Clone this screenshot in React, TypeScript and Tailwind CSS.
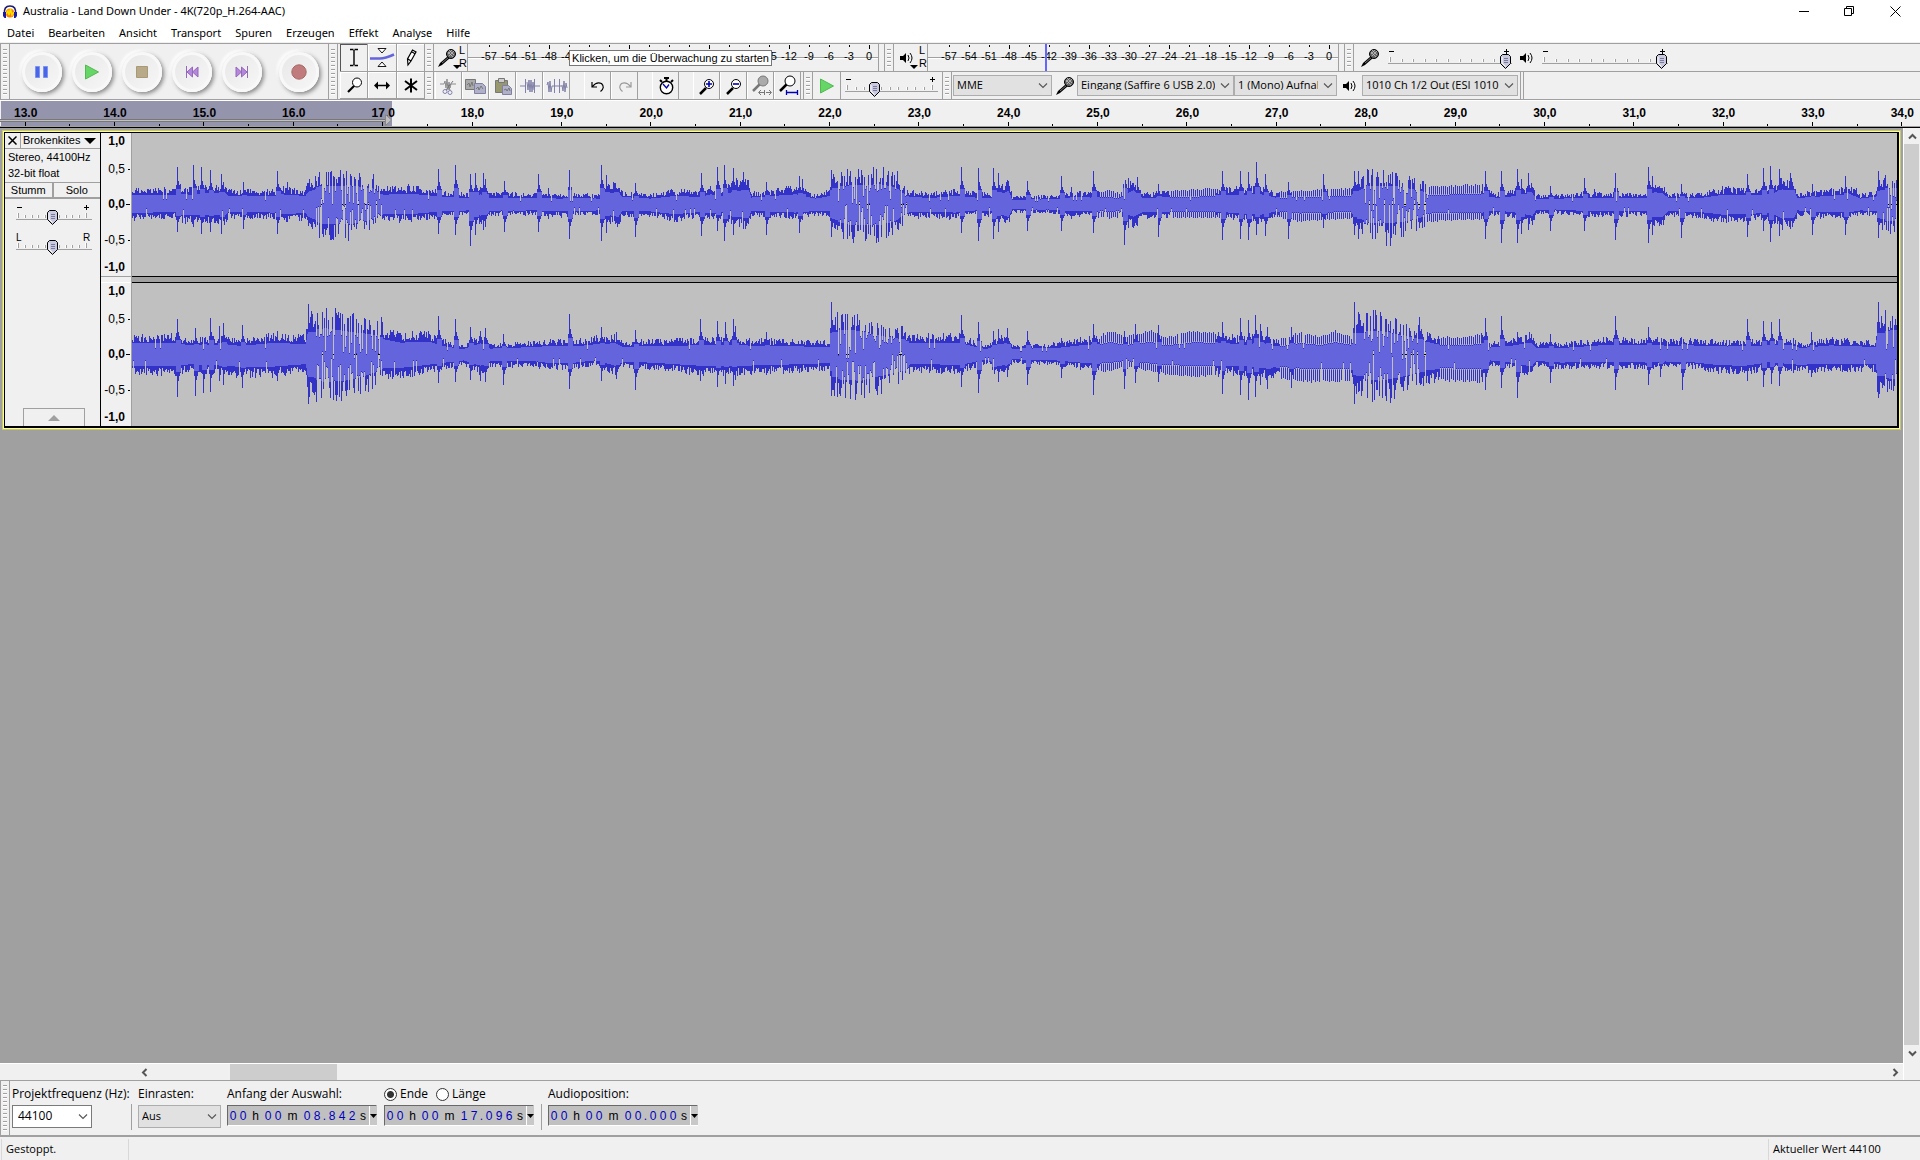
import { useState } from "react";
import type { ReactNode } from "react";
import clsx from "clsx";

type Point = [x: number, up: number, down: number];

interface Channel {
  base: Point[];
  spikes: Point[];
  striped: [number, number][];
}

const WAVE_START = 132;
const WAVE_WIDTH = 1765;
const WAVE_HEIGHT = 143;
const MIDDLE = 71;

// loud drum fills, where single columns do not cross the zero line
const FILLS: [number, number][] = [[316, 382], [838, 908], [1364, 1425], [1885, 1897]];

const LEFT: Channel = {
  base: [
    [132, 17, 15], [150, 16, 14], [175, 17, 13], [180, 19, 18], [190, 17, 18], [208, 20, 18], [224, 22, 20], [228, 15, 13], [275, 14, 14],
    [280, 18, 17], [305, 15, 15], [308, 23, 22], [320, 30, 31], [350, 31, 32], [372, 26, 24], [380, 17, 16], [410, 19, 17], [440, 14, 12],
    [468, 11, 10], [480, 18, 20], [487, 12, 11], [535, 11, 10], [560, 10, 12], [575, 11, 11], [600, 10, 10], [606, 20, 18], [618, 22, 22],
    [622, 13, 11], [650, 10, 12], [675, 15, 17], [700, 13, 13], [710, 18, 15], [722, 14, 13], [733, 24, 22], [748, 26, 24], [751, 12, 11],
    [795, 18, 14], [815, 10, 11], [830, 15, 12], [832, 29, 26], [850, 31, 33], [880, 33, 33], [895, 28, 27], [906, 14, 13], [930, 11, 13],
    [955, 15, 14], [975, 12, 10], [992, 12, 12], [1008, 24, 22], [1012, 8, 8], [1055, 9, 9], [1075, 13, 12], [1090, 12, 11], [1110, 14, 14],
    [1120, 11, 12], [1133, 26, 22], [1142, 11, 13], [1180, 14, 13], [1220, 16, 13], [1260, 18, 18], [1275, 12, 12], [1300, 14, 17], [1350, 16, 14],
    [1355, 22, 22], [1365, 31, 30], [1400, 29, 29], [1430, 18, 17], [1450, 19, 16], [1480, 20, 15], [1490, 13, 11], [1500, 11, 11],
    [1515, 15, 14], [1532, 20, 20], [1536, 10, 9], [1560, 10, 9], [1600, 12, 12], [1646, 11, 11], [1654, 22, 22], [1662, 20, 22], [1668, 11, 11],
    [1700, 11, 13], [1722, 17, 18], [1750, 16, 16], [1770, 18, 15], [1782, 27, 25], [1794, 25, 23], [1797, 11, 10], [1820, 14, 13], [1850, 18, 13],
    [1860, 10, 10], [1876, 14, 11], [1880, 26, 26], [1897, 27, 26],
  ],
  spikes: [
    [177, 37, 27], [193, 39, 22], [201, 37, 29], [210, 34, 27], [221, 30, 29], [243, 22, 24], [277, 33, 29], [287, 22, 10], [344, 20, 44],
    [346, 33, 20], [350, 30, 36], [353, 34, 20], [373, 30, 19], [438, 35, 29], [455, 39, 30], [470, 30, 41], [475, 31, 30], [483, 31, 25],
    [485, 25, 22], [504, 23, 27], [538, 30, 27], [548, 16, 14], [569, 34, 34], [601, 39, 36], [606, 29, 28], [635, 21, 32], [701, 31, 31],
    [717, 37, 26], [724, 39, 36], [733, 36, 30], [743, 32, 24], [766, 22, 30], [799, 28, 28], [802, 25, 15], [831, 34, 32], [841, 32, 20],
    [862, 21, 41], [876, 31, 38], [897, 33, 24], [961, 37, 28], [978, 36, 36], [993, 36, 34], [998, 31, 27], [1027, 23, 26], [1061, 28, 26],
    [1071, 17, 14], [1093, 33, 28], [1124, 39, 40], [1128, 26, 23], [1137, 27, 21], [1158, 20, 32], [1222, 33, 35], [1240, 33, 34],
    [1248, 32, 35], [1256, 42, 30], [1265, 30, 31], [1288, 22, 34], [1323, 30, 23], [1354, 33, 30], [1358, 33, 34], [1386, 22, 41],
    [1390, 27, 41], [1395, 31, 30], [1419, 29, 22], [1485, 33, 34], [1501, 33, 38], [1517, 35, 38], [1521, 25, 29], [1528, 31, 25],
    [1550, 18, 26], [1584, 26, 26], [1594, 15, 12], [1615, 31, 35], [1648, 37, 38], [1652, 28, 30], [1681, 20, 33], [1747, 30, 32],
    [1763, 36, 26], [1770, 38, 37], [1779, 35, 31], [1790, 31, 24], [1812, 20, 30], [1845, 28, 30], [1856, 16, 6], [1878, 33, 33],
  ],
  striped: [[1100, 1118], [1170, 1215], [1280, 1350], [1425, 1480]],
};

const RIGHT: Channel = {
  base: [
    [132, 20, 20], [175, 20, 21], [190, 16, 17], [225, 18, 20], [240, 15, 22], [270, 20, 22], [305, 19, 17], [308, 40, 40], [325, 43, 45],
    [350, 37, 42], [375, 32, 29], [382, 28, 24], [400, 21, 24], [428, 23, 18], [445, 14, 14], [463, 9, 10], [480, 20, 20], [490, 10, 12],
    [535, 13, 12], [550, 15, 15], [575, 14, 14], [595, 18, 10], [615, 20, 20], [622, 13, 13], [650, 15, 14], [700, 16, 20], [725, 17, 20],
    [740, 16, 20], [800, 14, 17], [830, 13, 15], [832, 40, 40], [860, 39, 43], [880, 30, 35], [905, 24, 26], [910, 20, 17], [960, 20, 18],
    [985, 9, 9], [1006, 21, 20], [1012, 10, 8], [1055, 11, 10], [1080, 16, 14], [1100, 19, 17], [1110, 24, 16], [1125, 18, 12], [1150, 24, 17],
    [1165, 17, 20], [1195, 24, 22], [1220, 21, 21], [1245, 17, 20], [1260, 22, 24], [1275, 14, 23], [1300, 22, 27], [1320, 18, 28], [1335, 24, 27],
    [1352, 18, 27], [1356, 38, 38], [1380, 39, 43], [1400, 32, 37], [1420, 25, 29], [1440, 17, 26], [1470, 18, 28], [1482, 21, 28], [1490, 12, 10],
    [1510, 15, 14], [1530, 21, 21], [1536, 12, 11], [1560, 11, 14], [1600, 16, 13], [1650, 17, 14], [1665, 15, 12], [1690, 16, 13], [1720, 14, 19],
    [1745, 14, 20], [1770, 16, 13], [1790, 17, 17], [1800, 11, 18], [1830, 16, 16], [1875, 13, 17], [1877, 38, 38], [1897, 40, 40],
  ],
  spikes: [
    [177, 35, 42], [195, 26, 41], [203, 26, 38], [210, 36, 37], [219, 28, 26], [223, 31, 30], [242, 29, 33], [277, 23, 26], [308, 50, 49],
    [335, 46, 40], [349, 46, 35], [372, 35, 34], [381, 37, 30], [438, 38, 28], [455, 35, 27], [470, 27, 25], [480, 23, 26], [485, 26, 27],
    [503, 20, 30], [569, 40, 34], [601, 27, 26], [616, 22, 24], [635, 24, 35], [700, 35, 26], [717, 33, 32], [725, 32, 29], [733, 35, 31],
    [735, 28, 25], [766, 22, 20], [831, 52, 41], [845, 40, 43], [961, 39, 32], [978, 32, 38], [993, 23, 30], [998, 25, 27], [1007, 26, 22],
    [1027, 23, 30], [1061, 16, 23], [1093, 30, 40], [1124, 23, 34], [1135, 30, 28], [1158, 29, 27], [1222, 32, 39], [1240, 36, 40],
    [1248, 34, 45], [1255, 39, 42], [1260, 30, 30], [1267, 27, 34], [1291, 27, 33], [1354, 52, 49], [1358, 42, 37], [1390, 28, 48],
    [1395, 36, 35], [1419, 37, 28], [1485, 36, 35], [1501, 38, 33], [1517, 22, 43], [1529, 22, 28], [1550, 20, 28], [1615, 38, 35],
    [1648, 27, 30], [1660, 23, 22], [1682, 24, 35], [1747, 35, 26], [1763, 33, 32], [1771, 32, 29], [1779, 35, 31], [1811, 22, 22], [1878, 52, 43],
  ],
  striped: [[1100, 1215], [1280, 1350], [1440, 1480]],
};

const inRange = (x: number, ranges: [number, number][]) => ranges.some(([a, b]) => x >= a && x <= b);

function baseAt(base: Point[], x: number, side: 1 | 2) {
  const i = Math.max(1, base.findIndex((p) => p[0] >= x));
  const a = base[i - 1];
  const b = base[i];
  const t = (x - a[0]) / (b[0] - a[0]);
  return a[side] + (b[side] - a[side]) * t;
}

function buildWave(channel: Channel, seed: number) {
  let state = seed;
  const rand = () => {
    state = (state * 1664525 + 1013904223) % 4294967296;
    return state / 4294967296;
  };
  const FALLOFF = [1, 0.62, 0.5, 0.42];
  let peaks = "";
  let rms = "";

  for (let i = 0; i < WAVE_WIDTH; i++) {
    const x = i + WAVE_START;
    const fill = inRange(x, FILLS);
    const stripe = inRange(x, channel.striped);
    const gap = fill ? rand() : 1;
    const ends = ([1, 2] as const).map((side) => {
      const b = baseAt(channel.base, x, side);
      const skip = (side === 1 && gap < 0.25) || (side === 2 && gap > 0.25 && gap < 0.5);
      let peak = b * (fill ? 0.4 + 0.75 * rand() : 0.6 + 0.46 * rand());
      let body = b * (fill ? 0.6 : 0.54);
      if (stripe) peak = i % 2 ? b * (0.9 + 0.12 * rand()) : b * 0.5;
      for (const s of channel.spikes) {
        const d = x - s[0];
        if (d >= -1 && d < 4) {
          peak = Math.max(peak, s[side] * (d < 0 ? 0.5 : FALLOFF[d]));
          body = Math.max(body, s[side] * 0.4);
        }
      }
      if (skip) peak = rand() * b * 0.7 - 6;
      else if (!fill && rand() < 0.03) peak = b * 0.3;
      return [Math.round(peak), Math.round(Math.min(body, peak - 1))];
    });
    const [[up, bodyUp], [down, bodyDown]] = ends;
    peaks += `M${i} ${MIDDLE - up}h1V${MIDDLE + down + 1}h-1z`;
    if (bodyUp + bodyDown > 0) rms += `M${i} ${MIDDLE - bodyUp}h1V${MIDDLE + bodyDown + 1}h-1z`;
  }
  return { peaks, rms };
}

const WAVES = [buildWave(LEFT, 7), buildWave(RIGHT, 91)];

function Waveform({ index }: { index: number }) {
  return (
    <svg viewBox={`0 0 ${WAVE_WIDTH} ${WAVE_HEIGHT}`} preserveAspectRatio="none" shapeRendering="crispEdges" className="block h-[143px] w-full bg-[#c0c0c0]">
      <path d={`M0 ${MIDDLE}h${WAVE_WIDTH}v1H0z`} fill="#000" />
      <path d={WAVES[index].peaks} fill="#3232c8" />
      <path d={WAVES[index].rms} fill="#6464dc" />
    </svg>
  );
}

function Grip({ tall }: { tall?: boolean }) {
  return (
    <div className="flex w-[10px] shrink-0 items-center justify-center border-x border-[#a0a0a0] bg-[#f0f0f0]">
      <div
        className={clsx(
          "w-1 bg-[repeating-linear-gradient(to_bottom,#a0a0a0_0_1px,#fff_1px_2px,transparent_2px_4px)]",
          tall ? "h-[46px]" : "h-[18px]",
        )}
      />
    </div>
  );
}

function MicIcon() {
  return (
    <svg width="20" height="20" viewBox="0 0 20 20" className="shrink-0">
      <path d="M1 19l2-4 8-7 2 2-8 7z" fill="#000" />
      <path d="M5 15l7-6" stroke="#777" strokeWidth="1" />
      <circle cx="14" cy="6" r="4.5" fill="#666" stroke="#000" />
      <path d="M11 4l5 5M12 2l5 5M12 8l5-5M11 6l4-4" stroke="#ccc" strokeWidth=".7" />
    </svg>
  );
}

function SpeakerIcon() {
  return (
    <svg width="14" height="14" viewBox="0 0 14 14" className="shrink-0">
      <path d="M0 5h3l3-3v10L3 9H0z" fill="#000" />
      <path d="M8 4q2 3 0 6M10 2q4 5 0 10" fill="none" stroke="#000" strokeWidth="1" />
    </svg>
  );
}

function Chevron() {
  return (
    <svg width="10" height="6" viewBox="0 0 10 6" className="pointer-events-none absolute right-[4px] top-1/2 -translate-y-1/2">
      <path d="M1 .5l4 4 4-4" fill="none" stroke="#555" strokeWidth="1.1" />
    </svg>
  );
}

interface SliderProps {
  label: string;
  width: number;
  value: number;
  low?: string;
  high?: string;
  ticks?: number;
}

function Slider({ label, width, value, low = "-", high = "+", ticks = 11 }: SliderProps) {
  const [v, setV] = useState(value);
  const cx = Math.round((v / 100) * (width - 12)) + 6;
  const step = (width - 8) / (ticks - 1);
  return (
    <div className="relative shrink-0">
      <svg width={width} height="22" className="block" shapeRendering="crispEdges">
        {Array.from({ length: ticks }, (_, i) => {
          const x = Math.round(2 + i * step);
          const h = i === 0 || i === ticks - 1 ? 5 : 3;
          return (
            <g key={i}>
              <rect x={x - 1} y={15 - h} width="1" height={h} fill="#fff" />
              <rect x={x} y={15 - h} width="1" height={h} fill="#a0a0a0" />
            </g>
          );
        })}
        <rect x="0" y="16" width={width} height="1" fill="#a0a0a0" />
        {low === "-" ? (
          <path d={`M1 4h5v1H1zM${width - 8} 4h5v1h-5zM${width - 6} 2h1v5h-1z`} fill="#000" />
        ) : (
          <g fontFamily="Liberation Sans, sans-serif" fontSize="10">
            <text x="0" y="8">{low}</text>
            <text x={width - 9} y="8">{high}</text>
          </g>
        )}
        <g shapeRendering="auto" transform={`translate(${cx - 6} 7)`}>
          <path d="M2.5 .5h6l2 2v7l-5 5-5-5v-7z" fill="#c8c8e0" stroke="#000" />
          <path d="M2 3v6l3.500 3.500" fill="none" stroke="#fff" />
          <path d="M4 4.500h4M4 6.500h4M4 8.500h4" stroke="#7c7c98" />
        </g>
      </svg>
      <input type="range" aria-label={label} value={v} onChange={(e) => setV(Number(e.target.value))} className="absolute inset-0 h-full w-full opacity-0" />
    </div>
  );
}

function Dropdown({ label, options, className }: { label: string; options: string[]; className: string }) {
  return (
    <div className={clsx("relative shrink-0", className)}>
      <select
        aria-label={label}
        className="block h-full w-full appearance-none overflow-hidden border border-[#adadad] bg-[#e1e1e1] pb-[2px] pl-[3px] pr-[18px] text-[11px] leading-none text-clip whitespace-nowrap text-black"
      >
        {options.map((o) => (
          <option key={o}>{o}</option>
        ))}
      </select>
      <Chevron />
    </div>
  );
}

function RoundButton({ label, children, className }: { label: string; children: ReactNode; className?: string }) {
  return (
    <button
      aria-label={label}
      className={clsx(
        "flex h-10 w-10 shrink-0 items-center justify-center rounded-full bg-linear-to-br from-[#e6e6e6] to-[#f8f8f8] shadow-[2px_2px_4px_#888,-2px_-2px_3px_#fff,inset_0_0_0_3px_#f8f8f8]",
        className,
      )}
    >
      <svg width="16" height="16" viewBox="0 0 16 16">{children}</svg>
    </button>
  );
}

const TRANSPORT = [
  { label: "Pause", art: <path d="M1.500 2.500h4v11h-4zM9.500 2.500h4v11h-4z" fill="#4a66e8" stroke="#7a92f4" /> },
  { label: "Wiedergabe", art: <path d="M1.500 1l13 7-13 7z" fill="#66d666" stroke="#52b852" /> },
  { label: "Stopp", art: <path d="M2.500 2.500h11v11h-11z" fill="#b8aa88" stroke="#a89a78" /> },
  { label: "Zum Anfang", art: <path d="M2.500 2v12M3 8l5.500-5v10zM8.500 8L14 3v10z" fill="#b486dc" stroke="#9468bc" /> },
  { label: "Zum Ende", art: <path d="M13.500 2v12M13 8L7.500 3v10zM7.500 8L2 3v10z" fill="#b486dc" stroke="#9468bc" /> },
  { label: "Aufnahme", art: <circle cx="8" cy="8" r="7.200" fill="#c07c7c" stroke="#a86868" /> },
];

function Transport() {
  return (
    <div className="flex w-[318px] shrink-0 items-center gap-[10px] pl-3">
      {TRANSPORT.map((b) => (
        <RoundButton key={b.label} label={b.label} className={b.label === "Aufnahme" ? "ml-[7px]" : ""}>
          {b.art}
        </RoundButton>
      ))}
    </div>
  );
}

const lens = (
  <>
    <path d="M3 16l7-7" stroke="#000" strokeWidth="2.200" />
    <circle cx="12" cy="6.500" r="4.500" fill="#fff" stroke="#000" />
  </>
);

const TOOLS = [
  { label: "Auswahlwerkzeug", art: <path d="M5 1.500h3.500M9.500 1.500H13M5 17.500h3.500M9.500 17.500H13M9 2v15" stroke="#000" strokeWidth="1.400" fill="none" /> },
  {
    label: "Hüllkurvenwerkzeug",
    art: (
      <>
        <path d="M-3 10.500h10q5 0 14-4" stroke="#6464dc" strokeWidth="2.500" fill="none" />
        <path d="M5 .5h8l-4 4.500zM9 14l4 4.500H5z" fill="#fff" stroke="#000" strokeWidth=".9" />
      </>
    ),
  },
  { label: "Zeichenwerkzeug", art: <path d="M6 17l-.5-6 5-9 3.500 2-5 9zM10 4l3.500 2M6 11l3 2" fill="#fff" stroke="#000" strokeWidth="1.200" /> },
  { label: "Zoomwerkzeug", art: lens },
  { label: "Verschiebewerkzeug", art: <path d="M1 9.500l4-4v3.200h8V5.500l4 4-4 4v-3.200H5v3.200z" fill="#000" /> },
  { label: "Multiwerkzeug", art: <path d="M9 2.500v14M3 5l12 9M15 5L3 14" stroke="#000" strokeWidth="2" /> },
];

function ToolGrid() {
  const [tool, setTool] = useState(0);
  return (
    <div className="grid w-[86px] shrink-0 grid-cols-3 grid-rows-2 gap-px border-l-2 border-[#f0f0f0] bg-[#a0a0a0] pb-px">
      {TOOLS.map((t, i) => (
        <button
          key={t.label}
          aria-label={t.label}
          aria-pressed={tool === i}
          onClick={() => setTool(i)}
          className={clsx("flex items-center justify-center overflow-hidden border-l border-t bg-[#f0f0f0]", tool === i ? "border-[#555]" : "border-white")}
        >
          <svg width="18" height="19" viewBox="0 0 18 19" overflow="visible">{t.art}</svg>
        </button>
      ))}
    </div>
  );
}

const SCALE = Array.from({ length: 20 }, (_, i) => i * 3 - 57);

function Meter({ icon, covered, children }: { icon: ReactNode; covered?: [number, number]; children?: ReactNode }) {
  return (
    <div className="flex shrink-0 items-stretch">
      <div className="flex w-[33px] items-center">
        <div className="flex w-[25px] items-center justify-center">{icon}</div>
        <div className="pb-[2px] text-[11px] leading-[13px]">
          <div>L</div>
          <div>R</div>
        </div>
      </div>
      <div className="relative w-[412px] border-l border-r border-[#a0a0a0]">
        <div className="mt-px h-[13px] border-b border-[#a0a0a0]" />
        <div className="h-[12px] border-t border-white" />
        <div className="absolute inset-y-0 left-[11px] grid w-[400px] grid-cols-[repeat(20,minmax(0,1fr))]">
          {SCALE.map((db, i) => (
            <div key={db} className="flex flex-col items-center">
              <div className="flex h-[6px] items-start pt-px">
                <div className={clsx("w-px bg-black", i % 4 === 3 ? "h-1" : "h-0.5")} />
              </div>
              {!(covered && db >= covered[0] && db <= covered[1]) && <div className="text-[11px] leading-[13px]">{db}</div>}
            </div>
          ))}
        </div>
        {children}
      </div>
    </div>
  );
}

const clip = <path d="M0 7h4l1-3 1 7 1-9 1 11 1-8 1 6 1-4h5" fill="none" stroke="#8c8c8c" />;
const zoomLens = (
  <>
    <path d="M2 17l6-6" stroke="#000" strokeWidth="2.500" />
    <circle cx="11" cy="7" r="4.500" fill="#fff" stroke="#000" />
  </>
);

const EDIT_GROUPS = [
  [
    {
      label: "Ausschneiden",
      art: (
        <>
          {clip}
          <path d="M13 4L6 13M8 8l2 5" stroke="#777" />
          <circle cx="5" cy="14.500" r="2" fill="none" stroke="#8080b4" />
          <circle cx="10" cy="15.500" r="2" fill="none" stroke="#8080b4" />
        </>
      ),
    },
    {
      label: "Kopieren",
      art: (
        <>
          <path d="M-1.500 2.500h10v10h-10z" fill="#aaa" stroke="#777" />
          <path d="M7.500 6.500h8l3 3v7h-11z" fill="#b0b0c8" stroke="#8080a0" />
          <path d="M0 8l2-2 1 4 2-5 1 4M9 12l2-2 1 3 2-4 2 3" fill="none" stroke="#777" />
        </>
      ),
    },
    {
      label: "Einfügen",
      art: (
        <>
          <path d="M1.500 3.500h12v12h-12z" fill="#98986e" stroke="#777" />
          <path d="M4.500 1.500h6v4h-6z" fill="#ccc" stroke="#777" />
          <path d="M8.500 8.500h6l3 3v6h-9z" fill="#b0b0c8" stroke="#8080a0" />
          <path d="M10 13l2-1 1 2 2-3 1 3" fill="none" stroke="#777" />
        </>
      ),
    },
    { label: "Trimmen", art: <path d="M-1 9h5M14 9h5M4.500 2v14M6 5l1 8 1-10 1 12 1-12 1 12 1-10 1 8M13.500 2v14" fill="none" stroke="#8080a8" /> },
    { label: "Stille", art: <path d="M-1 8l1-3 1 10 1-11 1 11 1-6M4 9h10M6.500 2v14M11.500 2v14M14 8l1 6 1-10 1 11 1-9 1 5" fill="none" stroke="#8080a8" /> },
  ],
  [
    { label: "Rückgängig", art: <path d="M3 5v5h5M3.500 9.500q4-5 9-3 4 4-1 8" fill="none" stroke="#000" strokeWidth="1.200" /> },
    { label: "Wiederholen", art: <path d="M15 5v5h-5M14.500 9.500q-4-5-9-3-4 4 1 8" fill="none" stroke="#999" strokeWidth="1.200" /> },
  ],
  [
    {
      label: "Synchronisation",
      art: (
        <>
          <path d="M7 1h5M9.500 1v3M3 3l2 2M16 3l-2 2" stroke="#000" strokeWidth="2" />
          <circle cx="9.500" cy="10.500" r="6.200" fill="#fff" stroke="#000" strokeWidth="1.400" />
          <path d="M6 7l3.500 4L12 7.500" fill="none" stroke="#0000b0" strokeWidth="1.300" />
        </>
      ),
    },
  ],
  [
    { label: "Einzoomen", art: <>{zoomLens}<path d="M8 7h6M11 4v6" stroke="#0000b0" strokeWidth="1.600" /></> },
    { label: "Auszoomen", art: <>{zoomLens}<path d="M8 7h6" stroke="#0000b0" strokeWidth="1.600" /></> },
    {
      label: "Auswahl einpassen",
      art: (
        <>
          <path d="M1 14l7-7" stroke="#777" strokeWidth="2.500" />
          <circle cx="11" cy="4" r="5" fill="#aaa" stroke="#777" />
          <path d="M7 15.500h5M14 15.500h5M9 13l-2.500 2.500L9 18M17 13l2.500 2.500L17 18M12.500 13v5" fill="none" stroke="#777" />
        </>
      ),
    },
    {
      label: "Projekt einpassen",
      art: (
        <>
          <path d="M1 14l7-7" stroke="#000" strokeWidth="2.500" />
          <circle cx="11" cy="4" r="5" fill="#fff" stroke="#000" />
          <path d="M7 15.500h12M7.500 13v5M18.500 13v5" fill="none" stroke="#0000b0" strokeWidth="1.300" />
        </>
      ),
    },
  ],
];

function EditBar() {
  return (
    <div className="flex shrink-0 gap-[14px] pl-px pr-[2px]">
      {EDIT_GROUPS.map((group, g) => (
        <div key={g} className="flex">
          {group.map((b) => (
            <button key={b.label} aria-label={b.label} className="flex w-[27px] items-center justify-center border-l border-r border-l-white border-r-[#a0a0a0]">
              <svg width="18" height="18" viewBox="0 0 18 18" overflow="visible">{b.art}</svg>
            </button>
          ))}
        </div>
      ))}
    </div>
  );
}

function Toolbars() {
  return (
    <div className="flex h-[57px] shrink-0 overflow-hidden border-y border-[#a0a0a0] bg-[#f0f0f0] font-['Liberation_Sans',Arial,sans-serif]">
      <Grip tall />
      <Transport />
      <Grip tall />
      <ToolGrid />
      <div className="flex min-w-0 flex-1 flex-col">
        <div className="flex h-[28px] border-b border-[#a0a0a0]">
          <Grip />
          <Meter
            covered={[-42, -18]}
            icon={
              <span className="relative">
                <MicIcon />
                <svg width="8" height="4" className="absolute -bottom-px -right-1"><path d="M0 0h8L4 4z" /></svg>
              </span>
            }
          >
            <div role="tooltip" className="absolute left-[101px] top-[6px] flex h-[16px] w-[203px] items-center justify-center border border-[#767676] bg-white text-[11px] leading-none whitespace-nowrap">
              Klicken, um die Überwachung zu starten
            </div>
          </Meter>
          <div className="w-[5px]" />
          <Grip />
          <Meter
            icon={
              <span className="relative">
                <SpeakerIcon />
                <svg width="8" height="4" className="absolute -bottom-1 -right-1"><path d="M0 0h8L4 4z" /></svg>
              </span>
            }
          >
            <div className="absolute inset-y-0 left-[117px] w-0.5 bg-[#6464ff]" />
          </Meter>
          <div className="w-[5px]" />
          <Grip />
          <div className="flex items-center gap-2 pl-[6px]">
            <MicIcon />
            <Slider label="Aufnahmelautstärke" width={124} value={100} />
            <SpeakerIcon />
            <Slider label="Wiedergabelautstärke" width={126} value={100} />
          </div>
        </div>
        <div className="flex h-[27px]">
          <Grip />
          <EditBar />
          <Grip />
          <button aria-label="Mit Geschwindigkeit abspielen" className="flex w-[28px] items-center justify-center border-r border-[#a0a0a0]">
            <svg width="16" height="16"><path d="M1.500 1l13 7-13 7z" fill="#66d666" stroke="#52b852" /></svg>
          </button>
          <div className="flex items-center px-1">
            <Slider label="Geschwindigkeit" width={93} value={30} />
          </div>
          <Grip />
          <div className="flex items-center pl-px font-['Open_Sans','Noto_Sans',sans-serif]">
            <Dropdown label="Audio-Host" options={["MME"]} className="h-[21px] w-[99px]" />
            <div className="flex w-[25px] justify-center"><MicIcon /></div>
            <Dropdown label="Aufnahmegerät" options={["Eingang (Saffire 6 USB 2.0)"]} className="h-[21px] w-[157px]" />
            <Dropdown label="Aufnahmekanäle" options={["1 (Mono) Aufnahmekanal"]} className="h-[21px] w-[103px]" />
            <div className="flex w-[25px] justify-center"><SpeakerIcon /></div>
            <Dropdown label="Wiedergabegerät" options={["1010 Ch 1/2 Out (ESI 1010"]} className="h-[21px] w-[156px]" />
          </div>
          <div className="ml-[2px] w-[4px] border-x border-[#a0a0a0]" />
        </div>
      </div>
    </div>
  );
}

const SECONDS = Array.from({ length: 22 }, (_, i) => (i < 5 ? `${i + 13}.0` : `${i + 13},0`));

function Timeline() {
  return (
    <div className="relative h-[28px] shrink-0 overflow-hidden border-b border-t border-b-black border-t-white bg-[#f0f0f0] font-['Liberation_Sans',Arial,sans-serif]">
      <div className="absolute inset-y-0 left-px w-[391px] bg-[#9494ac]" />
      <div className="absolute left-0 top-[18px] h-[3px] w-[386px] border-y border-[#777] bg-[#c0c0c0]" />
      <div className="relative -ml-[19px] -mr-[27px] grid h-full grid-cols-[repeat(22,minmax(0,1fr))] border-b border-[#a0a0a0]">
        {SECONDS.map((s) => (
          <div key={s} className="flex flex-col">
            <div className="mt-[6px] flex-1 text-center text-[12px] leading-[13px] font-bold">{s}</div>
            <div className="flex h-[4px] items-end">
              <div className="flex-1" />
              <div className="h-[4px] w-px bg-black" />
              <div className="flex-1" />
              <div className="h-[2px] w-px bg-black" />
            </div>
          </div>
        ))}
      </div>
      <svg width="8" height="12" className="absolute left-[385px] top-[13px]"><path d="M.5 .5v11L6.500 6z" fill="#c0c0c0" stroke="#888" /></svg>
    </div>
  );
}

function TrackPanel() {
  return (
    <div className="flex w-[95px] shrink-0 flex-col bg-[#f0f0f0] text-[11px]">
      <div className="flex h-[16px] border-b border-[#a0a0a0]">
        <button aria-label="Spur schließen" className="flex w-[16px] items-center justify-center border-r border-[#a0a0a0]">
          <svg width="9" height="9"><path d="M.5 .5l8 8M8.500 .5l-8 8" stroke="#000" strokeWidth="1.500" /></svg>
        </button>
        <button className="flex flex-1 items-center justify-between pl-[2px] pr-1">
          Brokenkites
          <svg width="12" height="6"><path d="M0 0h12L6 6z" /></svg>
        </button>
      </div>
      <div className="h-[34px] border-b border-[#a0a0a0] pl-[3px] leading-[16px]">
        <div>Stereo, 44100Hz</div>
        <div>32-bit float</div>
      </div>
      <div className="flex h-[16px] border-b-2 border-[#a0a0a0]">
        <button className="flex flex-1 items-center justify-center border-r-2 border-[#a0a0a0]">Stumm</button>
        <button className="flex flex-1 items-center justify-center">Solo</button>
      </div>
      <div className="mt-1 flex flex-col gap-2 pl-[11px]">
        <Slider label="Verstärkung" width={76} value={48} />
        <Slider label="Balance" width={76} value={48} low="L" high="R" />
      </div>
      <button aria-label="Spur einklappen" className="mt-auto ml-[18px] flex h-[18px] w-[62px] items-center justify-center border border-b-0 border-[#a0a0a0]">
        <svg width="12" height="6"><path d="M0 6h12L6 0z" fill="#a0a0a0" /></svg>
      </button>
    </div>
  );
}

const LEVELS = [
  { text: "1,0", bold: true, tick: "" },
  { text: "0,5", bold: false, tick: "w-0.5" },
  { text: "0,0", bold: true, tick: "w-1" },
  { text: "-0,5", bold: false, tick: "w-0.5" },
  { text: "-1,0", bold: true, tick: "" },
];

function LevelRuler() {
  return (
    <div className="grid h-[143px] grid-rows-[16px_41px_29px_43px_14px] text-[12px] leading-[11px]">
      {LEVELS.map((l) => (
        <div key={l.text} className="flex items-center justify-end gap-px pr-px last:items-start">
          <span className={l.bold ? "font-bold" : ""}>{l.text}</span>
          <span className="flex w-1 justify-end">
            <span className={clsx("h-px bg-black", l.tick)} />
          </span>
        </div>
      ))}
    </div>
  );
}

function Track() {
  return (
    <div className="border border-[#c4c486]">
      <div className="border border-[#ffff80]">
        <div className="flex border border-b-2 border-r-2 border-black font-['Liberation_Sans',Arial,sans-serif]">
          <TrackPanel />
          <div className="w-[32px] shrink-0 border-l border-r border-l-black border-r-[#a0a0a0] bg-[#f0f0f0]">
            <LevelRuler />
            <div className="h-[7px] border-b border-t border-b-white border-t-[#a0a0a0]" />
            <LevelRuler />
          </div>
          <div className="min-w-0 flex-1">
            <Waveform index={0} />
            <div className="h-[7px] border-y border-black bg-[#a0a0a0]" />
            <Waveform index={1} />
          </div>
        </div>
      </div>
    </div>
  );
}

function ScrollArrow({ d, label }: { d: string; label: string }) {
  return (
    <button aria-label={label} className="flex h-4 w-4 shrink-0 items-center justify-center">
      <svg width="9" height="9" viewBox="0 0 9 9"><path d={d} fill="none" stroke="#555" strokeWidth="2" /></svg>
    </button>
  );
}

function Workspace() {
  return (
    <div className="flex min-h-0 flex-1">
      <div className="flex min-w-0 flex-1 flex-col">
        <div className="flex-1 bg-[#a0a0a0] pl-[2px] pr-[2px] pt-[2px]">
          <Track />
        </div>
        <div className="flex h-[17px] shrink-0 items-center border-t border-white pl-[136px]">
          <ScrollArrow label="Nach links" d="M6.500 1L3 4.500 6.500 8" />
          <div className="flex h-full flex-1 items-stretch">
            <div className="ml-[78px] w-[107px] bg-[#cdcdcd]" />
          </div>
          <ScrollArrow label="Nach rechts" d="M2.500 1L6 4.500 2.500 8" />
        </div>
      </div>
      <div className="flex w-[17px] shrink-0 flex-col border-l border-white pb-[19px]">
        <ScrollArrow label="Nach oben" d="M1 6.500L4.500 3 8 6.500" />
        <div className="mr-px flex-1 bg-[#cdcdcd]" />
        <ScrollArrow label="Nach unten" d="M1 2.500L4.500 6 8 2.500" />
      </div>
    </div>
  );
}

function cellClass(c: string) {
  if (c === "h") return "w-[15px]";
  if (c === "m") return "w-[19px]";
  if (c === ".") return "w-[5px] text-[#0000c0]";
  if (c === "s") return "w-[12px]";
  return "w-[10px] text-[#0000c0]";
}

function TimeField({ value, label }: { value: string; label: string }) {
  return (
    <div
      role="group"
      aria-label={label}
      className="flex h-[21px] w-[150px] border border-b-white border-l-[#696969] border-r-white border-t-[#696969] bg-[#c0c0c0] font-['Liberation_Sans',Arial,sans-serif] text-[12px] leading-[20px]"
    >
      {value.split("").map((c, i) => (
        <span key={i} className={clsx("flex shrink-0 justify-center", cellClass(c))}>{c}</span>
      ))}
      <button aria-label={`${label}: Format`} className="flex flex-1 items-center justify-center border-l border-white bg-[#c8c8c8]">
        <svg width="7" height="4"><path d="M0 0h7L3.500 4z" /></svg>
      </button>
    </div>
  );
}

function SelectionBar() {
  const [mode, setMode] = useState("Ende");
  return (
    <div className="flex h-[57px] shrink-0 border-b-2 border-t border-[#a0a0a0] text-[12px] leading-[16px]">
      <Grip tall />
      <div className="flex pl-[2px] pt-[5px]">
        <div className="w-[119px]">
          <label htmlFor="rate" className="mb-[3px] block whitespace-nowrap">Projektfrequenz (Hz):</label>
          <div className="relative w-[80px]">
            <input id="rate" defaultValue="44100" className="block h-[23px] w-full border border-[#7a7a7a] bg-white pb-[2px] pl-[5px] text-[12px]" />
            <Chevron />
          </div>
        </div>
        <div className="mt-[18px] mr-[6px] h-[26px] w-px bg-[#a0a0a0]" />
        <div className="w-[89px]">
          <div className="mb-[3px]">Einrasten:</div>
          <Dropdown label="Einrasten" options={["Aus"]} className="h-[23px] w-[83px]" />
        </div>
        <div className="w-[157px]">
          <div className="mb-[3px] whitespace-nowrap">Anfang der Auswahl:</div>
          <TimeField label="Anfang der Auswahl" value="00h00m08.842s" />
        </div>
        <div className="w-[157px]">
          <div className="mb-[3px] flex gap-[8px]">
            {["Ende", "Länge"].map((m) => (
              <label key={m} className="flex items-center gap-[3px]">
                <input
                  type="radio"
                  name="range-mode"
                  checked={mode === m}
                  onChange={() => setMode(m)}
                  className="h-[13px] w-[13px] appearance-none rounded-full border border-[#333] bg-white checked:bg-[radial-gradient(#333_0_3px,#fff_4px)]"
                />
                {m}
              </label>
            ))}
          </div>
          <TimeField label={mode} value="00h00m17.096s" />
        </div>
        <div className="mt-[18px] mr-[6px] h-[26px] w-px bg-[#a0a0a0]" />
        <div>
          <div className="mb-[3px]">Audioposition:</div>
          <TimeField label="Audioposition" value="00h00m00.000s" />
        </div>
      </div>
    </div>
  );
}

const MENU = ["Datei", "Bearbeiten", "Ansicht", "Transport", "Spuren", "Erzeugen", "Effekt", "Analyse", "Hilfe"];

function TitleBar() {
  return (
    <header className="h-[42px] shrink-0 bg-white">
      <div className="flex h-[23px] items-center justify-between pl-[3px]">
        <div className="flex items-center gap-[6px] text-[11px]">
          <svg width="14" height="14" viewBox="0 0 14 14">
            <circle cx="7" cy="8" r="4.500" fill="#ff8000" />
            <path d="M3 9l2-3 1 4 1.500-6L9 10l2-3" fill="none" stroke="#ffe000" strokeWidth="1.500" />
            <path d="M1.500 9q-1-8 5.500-8t5.500 8" fill="none" stroke="#1c1c70" strokeWidth="1.600" />
            <path d="M0 7h3v6H1.500L0 11zM14 7h-3v6h1.500L14 11z" fill="#1c1ca0" />
          </svg>
          <h1 className="font-['Noto_Sans',sans-serif]">Australia - Land Down Under - 4K(720p_H.264-AAC)</h1>
        </div>
        <div className="flex pr-[2px]">
          <button aria-label="Minimieren" className="flex w-[45px] items-center justify-center">
            <svg width="11" height="11"><path d="M0 5.500h10" stroke="#000" /></svg>
          </button>
          <button aria-label="Verkleinern" className="flex w-[45px] items-center justify-center">
            <svg width="11" height="11"><path d="M.5 2.500h7v7h-7zM2.500 2.500v-2h7v7h-2" fill="none" stroke="#000" /></svg>
          </button>
          <button aria-label="Schließen" className="flex w-[46px] items-center justify-center">
            <svg width="11" height="11"><path d="M.5 .5l10 10M10.500 .5l-10 10" stroke="#000" /></svg>
          </button>
        </div>
      </div>
      <nav className="flex gap-[14px] pl-[7px] font-['Noto_Sans',sans-serif] text-[11px] leading-[19px]">
        {MENU.map((m) => (
          <button key={m}>{m}</button>
        ))}
      </nav>
    </header>
  );
}

export default function App() {
  return (
    <div className="flex h-screen flex-col overflow-hidden bg-[#f0f0f0] font-['Open_Sans','Noto_Sans',sans-serif] text-black">
      <TitleBar />
      <div className="h-px shrink-0" />
      <Toolbars />
      <Timeline />
      <Workspace />
      <SelectionBar />
      <footer className="flex h-[23px] shrink-0 items-stretch pt-[2px] text-[11px] leading-[20px]">
        <div className="ml-px w-[128px] border-l border-r border-[#d8d8d8] pl-1">Gestoppt.</div>
        <div className="flex-1" />
        <div className="w-[152px] border-l border-[#d8d8d8] pl-1">Aktueller Wert 44100</div>
      </footer>
    </div>
  );
}
